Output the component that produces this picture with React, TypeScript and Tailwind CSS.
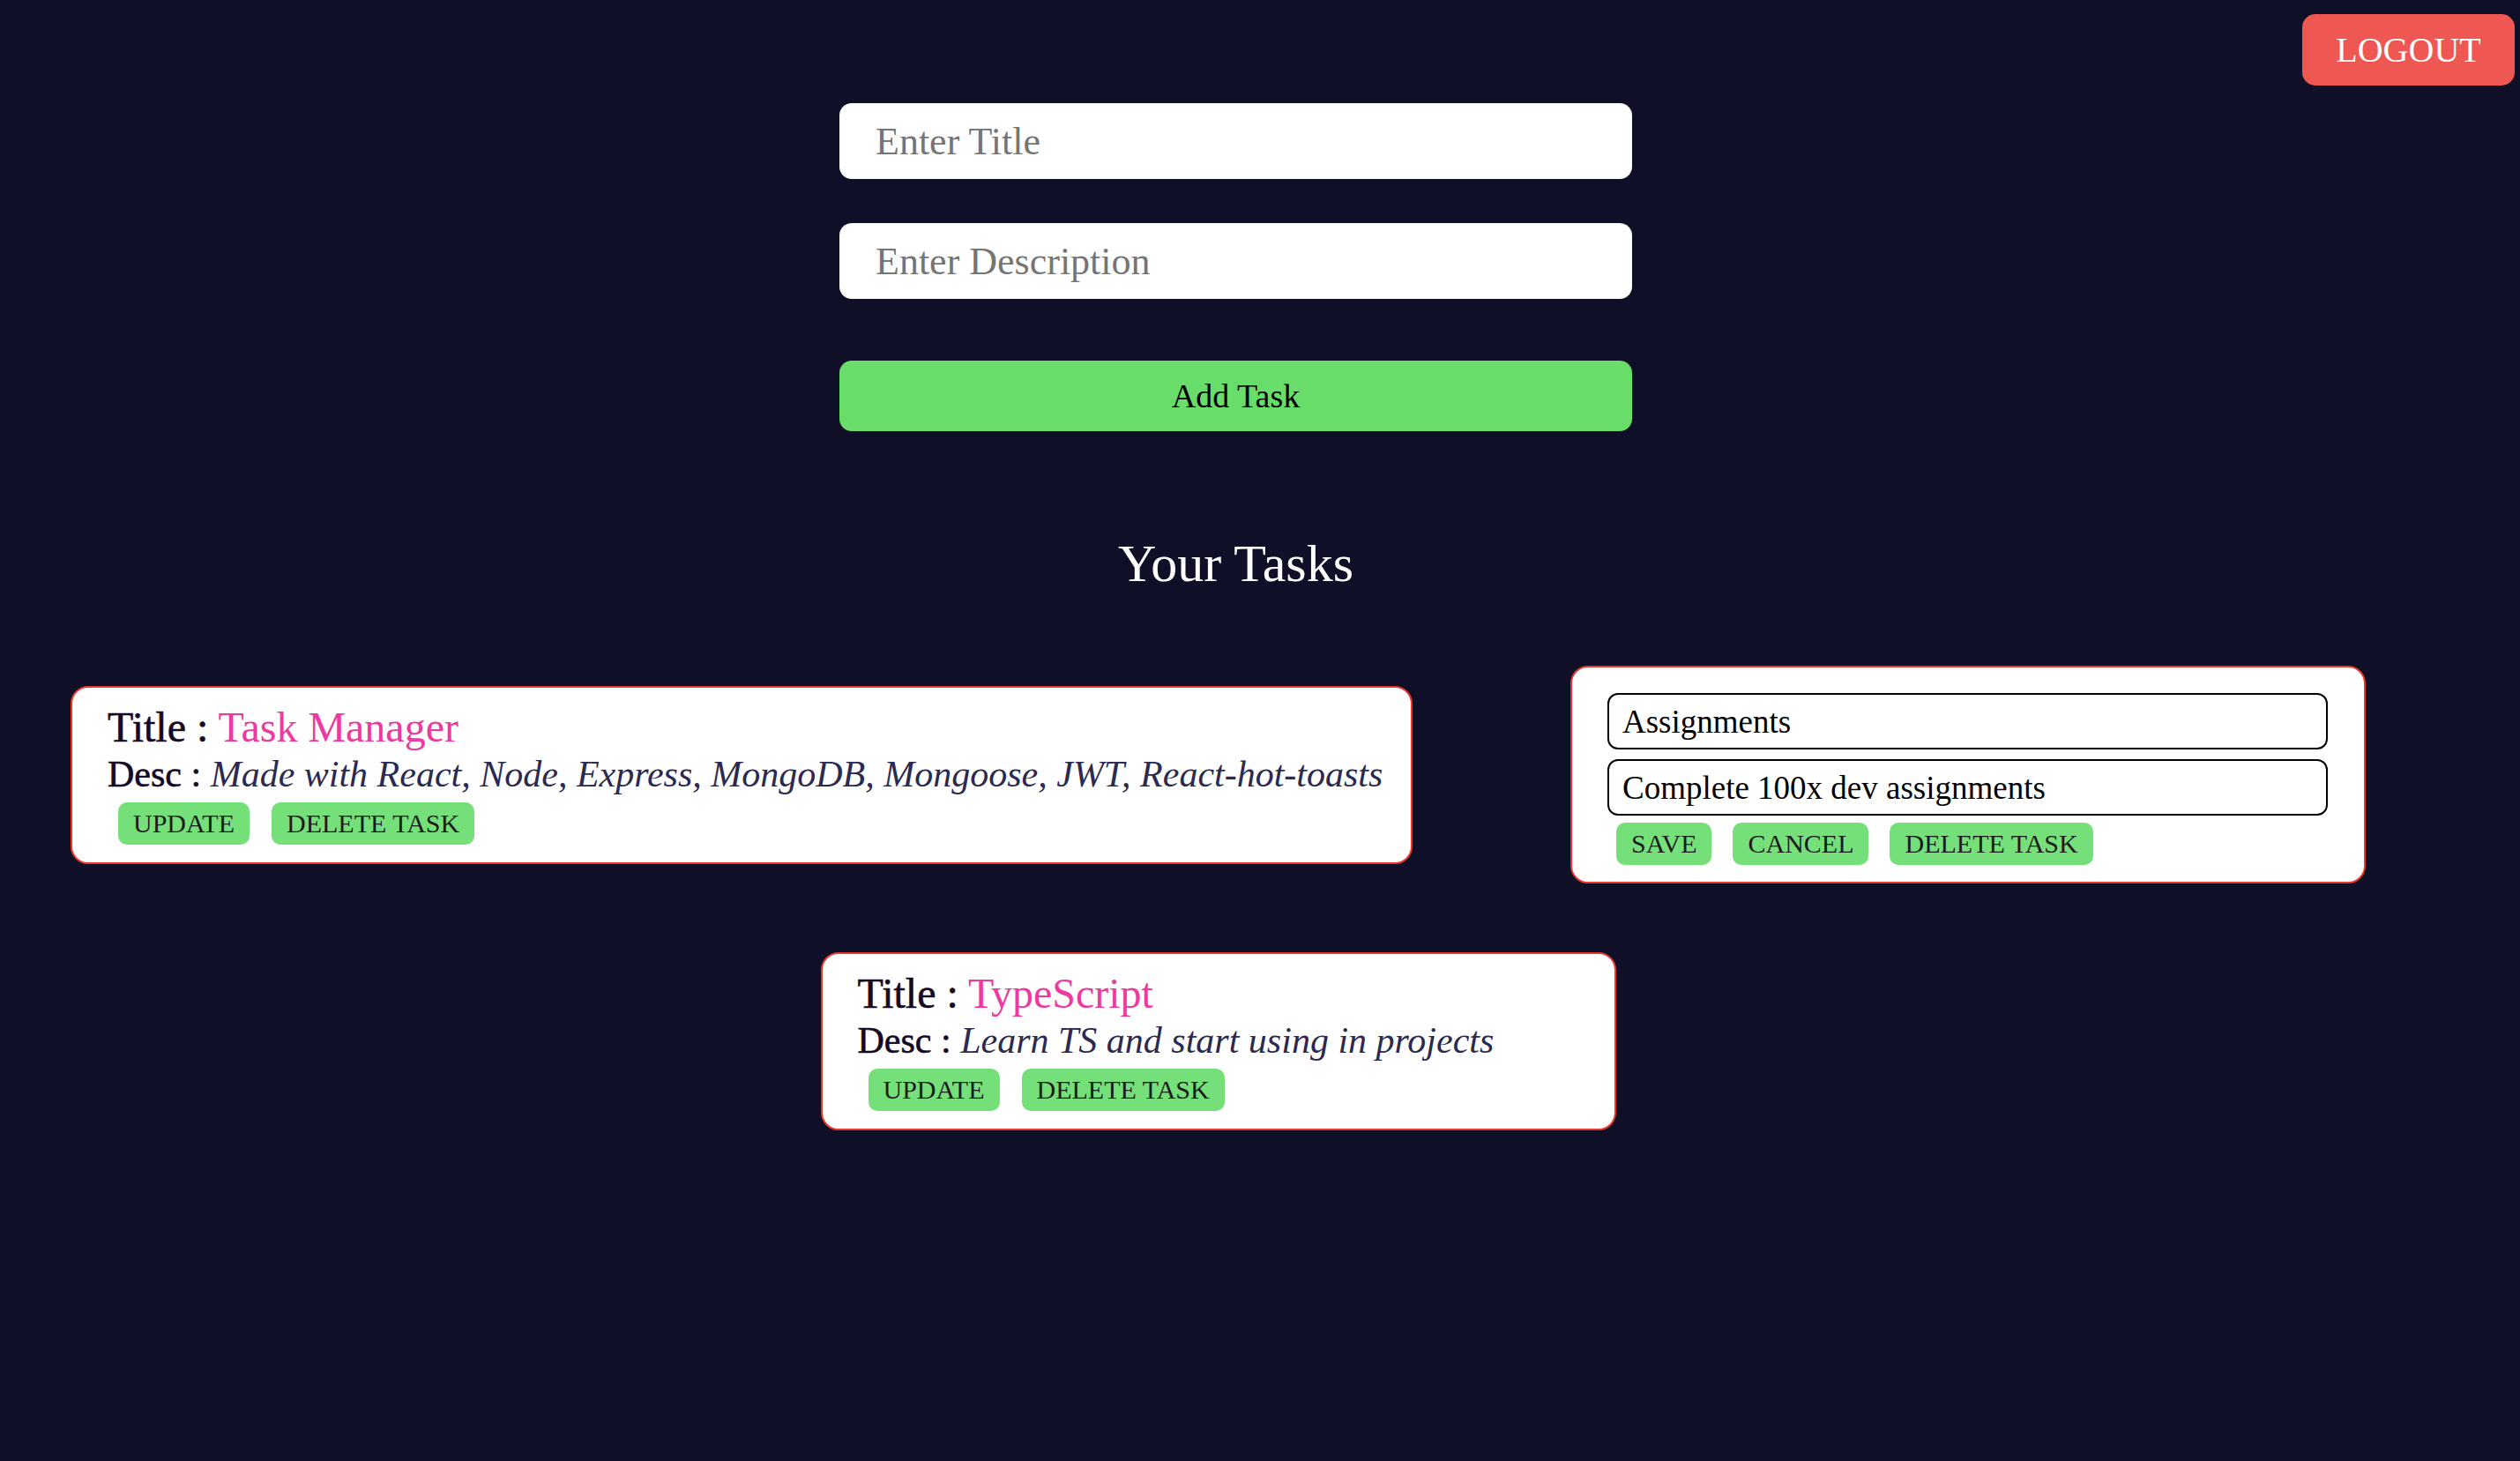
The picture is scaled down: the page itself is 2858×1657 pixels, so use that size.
import { useState } from "react";

type Task = {
  id: number;
  title: string;
  description: string;
};

const TASKS: Task[] = [
  {
    id: 1,
    title: "Task Manager",
    description: "Made with React, Node, Express, MongoDB, Mongoose, JWT, React-hot-toasts",
  },
  { id: 2, title: "Assignments", description: "Complete 100x dev assignments" },
  { id: 3, title: "TypeScript", description: "Learn TS and start using in projects" },
];

function SmallButton({ label }: { label: string }) {
  return (
    <button className="h-[48px] rounded-[10px] bg-[#75e07a] px-[17px] text-[30px] leading-none text-[#1b1b1b]">
      {label}
    </button>
  );
}

function TaskCard({ task, width }: { task: Task; width: string }) {
  return (
    <div
      className={`flex flex-col rounded-[20px] border-2 border-[#e8392c] bg-white pb-[20px] pl-[40px] pr-[20px] pt-[18px] ${width}`}
    >
      <p className="whitespace-nowrap text-[48px] leading-[53px]">
        <span className="text-[#150a24] [-webkit-text-stroke:0.6px_#150a24]">Title : </span>
        <span className="text-[#ec3aa0]">{task.title}</span>
      </p>
      <p className="mt-[4px] whitespace-nowrap text-[42px] leading-[47px]">
        <span className="text-[#150a24] [-webkit-text-stroke:0.6px_#150a24]">Desc : </span>
        <span className="italic text-[#2b2a50]">{task.description}</span>
      </p>
      <div className="ml-[12px] mt-[8px] flex gap-[25px]">
        <SmallButton label="UPDATE" />
        <SmallButton label="DELETE TASK" />
      </div>
    </div>
  );
}

function EditCard({ task }: { task: Task }) {
  const [title, setTitle] = useState(task.title);
  const [description, setDescription] = useState(task.description);

  return (
    <div className="flex w-[902px] flex-col rounded-[20px] border-2 border-[#e8392c] bg-white pb-[19px] pl-[40px] pr-[41px] pt-[29px]">
      <input
        className="h-[64px] rounded-[12px] border-2 border-black px-[15px] text-[37px] text-black outline-none"
        value={title}
        onChange={(e) => setTitle(e.target.value)}
      />
      <input
        className="mt-[11px] h-[64px] rounded-[12px] border-2 border-black px-[15px] text-[37px] text-black outline-none"
        value={description}
        onChange={(e) => setDescription(e.target.value)}
      />
      <div className="ml-[10px] mt-[8px] flex gap-[24px]">
        <SmallButton label="SAVE" />
        <SmallButton label="CANCEL" />
        <SmallButton label="DELETE TASK" />
      </div>
    </div>
  );
}

export default function App() {
  const [title, setTitle] = useState("");
  const [description, setDescription] = useState("");

  return (
    <main className="min-h-screen bg-[#100f28] font-['Liberation_Serif',serif]">
      <header className="flex justify-end pr-[6px] pt-[16px]">
        <button className="h-[81px] w-[241px] rounded-[15px] bg-[#ee5752] text-[40px] leading-none text-white">
          LOGOUT
        </button>
      </header>

      <section className="mt-[20px] flex flex-col items-center pr-[55px]">
        <input
          className="h-[86px] w-[899px] rounded-[14px] bg-white px-[41px] text-[44px] text-black outline-none placeholder:text-[#757575]"
          placeholder="Enter Title"
          value={title}
          onChange={(e) => setTitle(e.target.value)}
        />
        <input
          className="mt-[50px] h-[86px] w-[899px] rounded-[14px] bg-white px-[41px] text-[44px] text-black outline-none placeholder:text-[#757575]"
          placeholder="Enter Description"
          value={description}
          onChange={(e) => setDescription(e.target.value)}
        />
        <button className="mt-[70px] h-[80px] w-[899px] rounded-[14px] bg-[#68dd6a] text-[38px] leading-none text-black">
          Add Task
        </button>

        <h2 className="mt-[117px] text-[60px] leading-[66px] text-white">Your Tasks</h2>
      </section>

      <section className="mt-[83px] flex flex-col pb-[40px]">
        <div className="flex items-center gap-[179px] pl-[80px]">
          <TaskCard task={TASKS[0]} width="w-[1522px]" />
          <EditCard task={TASKS[1]} />
        </div>
        <div className="mt-[78px] flex justify-center pr-[95px]">
          <TaskCard task={TASKS[2]} width="w-[902px]" />
        </div>
      </section>
    </main>
  );
}
